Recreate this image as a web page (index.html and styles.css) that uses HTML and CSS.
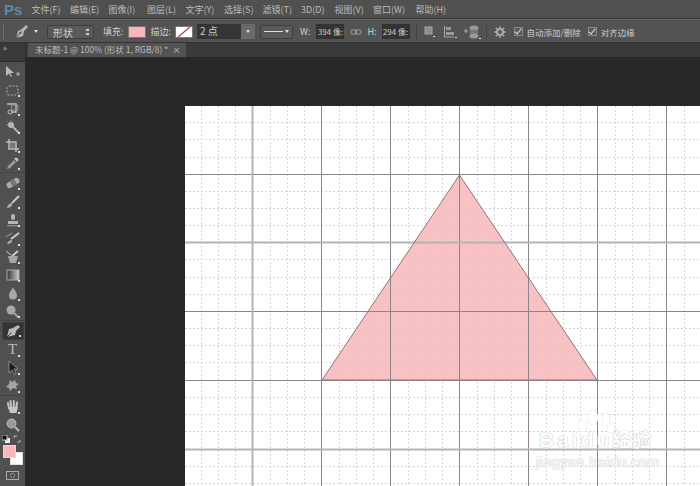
FILE: index.html
```html
<!DOCTYPE html>
<html lang="zh-CN">
<head>
    <meta charset="UTF-8">
    <meta name="viewport" content="width=device-width, initial-scale=1.0">
    <title>Photoshop</title>
    <link rel="stylesheet" href="styles.css">
</head>
<body>
    <div class="menubar">
        <span class="logo">Ps</span>
        <span class="menu-item">文件(F)</span>
        <span class="menu-item">编辑(E)</span>
        <span class="menu-item">图像(I)</span>
        <span class="menu-item">图层(L)</span>
        <span class="menu-item">文字(Y)</span>
        <span class="menu-item">选择(S)</span>
        <span class="menu-item">滤镜(T)</span>
        <span class="menu-item menu-3d">3D(D)</span>
        <span class="menu-item">视图(V)</span>
        <span class="menu-item menu-wide">窗口(W)</span>
        <span class="menu-item">帮助(H)</span>
    </div>

    <div class="options">
        <div class="grip"></div>
        <svg class="opt-pen" width="16" height="16" viewBox="0 0 16 16"><path d="M13 1 15 3 11 7 10 12 3 14 5 7 9 5Z" fill="#b8b8b8"/><path d="M3 14 7 9" stroke="#444" stroke-width="1"/><circle cx="7.500" cy="8.500" r="1" fill="#444"/></svg>
        <span class="caret opt-caret"></span>
        <div class="select">形状<span class="updown"></span></div>
        <span class="label fill-label">填充:</span>
        <div class="swatch swatch-pink"></div>
        <span class="label stroke-label">描边:</span>
        <div class="swatch swatch-none"><svg width="18" height="12" viewBox="0 0 18 12"><path d="M2 12 16 0" stroke="#b3374a" stroke-width="1.200"/></svg></div>
        <div class="stroke-size">2 点</div>
        <div class="size-btn"><span class="caret"></span></div>
        <div class="line-style"><span class="line"></span><span class="caret"></span></div>
        <span class="label w-label">W:</span>
        <div class="dim">394 像:</div>
        <svg class="link" width="12" height="8" viewBox="0 0 14 8"><rect x="1" y="1.500" width="7" height="5" rx="2.500" fill="none" stroke="#aaa"/><rect x="6" y="1.500" width="7" height="5" rx="2.500" fill="none" stroke="#aaa"/></svg>
        <span class="label h-label">H:</span>
        <div class="dim">294 像:</div>
        <div class="sep sep-a"></div>
        <svg class="opt-icon path-op" width="12" height="12" viewBox="0 0 12 12"><rect x="1" y="1" width="7" height="7" fill="#8c8c8c" stroke="#a5a5a5"/><rect x="9" y="10" width="2" height="1" fill="#ddd"/></svg>
        <svg class="opt-icon path-align" width="14" height="14" viewBox="0 0 14 14"><path d="M1.500 1v11H11" fill="none" stroke="#aaa"/><rect x="3" y="2" width="5" height="3" fill="#999"/><rect x="3" y="7" width="8" height="3" fill="#999"/><rect x="12" y="12" width="2" height="1" fill="#ddd"/></svg>
        <svg class="opt-icon path-order" width="18" height="16" viewBox="0 0 18 16"><path d="M0 7h4M2 5v4" stroke="#aaa"/><ellipse cx="10" cy="4" rx="4.500" ry="2.500" fill="#9a9a9a"/><ellipse cx="10" cy="8" rx="4.500" ry="2.500" fill="#777"/><ellipse cx="10" cy="12" rx="4.500" ry="2.500" fill="#9a9a9a"/><rect x="15" y="14" width="2" height="1" fill="#ddd"/></svg>
        <div class="sep sep-b"></div>
        <svg class="opt-icon gear" width="12" height="12" viewBox="0 0 14 14"><circle cx="7" cy="7" r="3.500" fill="none" stroke="#aaa" stroke-width="2.500"/><path d="M7 0v14M0 7h14M2 2l10 10M12 2 2 12" stroke="#aaa" stroke-width="1.500" stroke-dasharray="2.500 9"/></svg>
        <label class="check check-a"><span class="box"></span>自动添加/删除</label>
        <label class="check check-b"><span class="box"></span>对齐边缘</label>
    </div>

    <div class="main">
        <div class="toolbar">
            <div class="tool-top">»</div>
            <div class="tool" style="height:19px"><svg width="16" height="14" viewBox="0 0 16 14"><path d="M1 1v10l3-2.500 2 3.500 1-1-2-3h4Z" fill="#bbb"/><path d="M11 9h4M13 7v4" stroke="#bbb"/></svg></div>
            <div class="tool more"><svg width="13" height="11" viewBox="0 0 13 11"><rect x="1" y="1" width="11" height="9" rx="2" fill="none" stroke="#b0b0b0" stroke-dasharray="2 1.500"/></svg></div>
            <div class="tool more"><svg width="14" height="13" viewBox="0 0 14 13"><path d="M1 2h9v8H5" fill="none" stroke="#bbb" stroke-width="1.500"/><path d="M5 3h7v5H6Z" fill="none" stroke="#999"/><circle cx="4" cy="10" r="2" fill="none" stroke="#bbb"/></svg></div>
            <div class="tool more"><svg width="14" height="14" viewBox="0 0 14 14"><path d="M6 6 13 13" stroke="#b5b5b5" stroke-width="2"/><circle cx="5" cy="5" r="3" fill="#b5b5b5"/><path d="M5 0v2M0 5h2M1.500 1.500l1 1" stroke="#888"/></svg></div>
            <div class="tool more"><svg width="13" height="13" viewBox="0 0 13 13"><path d="M3 0v10h10M0 3h10v10" fill="none" stroke="#bbb" stroke-width="1.500"/><rect x="4" y="4" width="5" height="5" fill="#777"/></svg></div>
            <div class="tool more tool-end"><svg width="13" height="13" viewBox="0 0 13 13"><path d="M1 12 2 9 8 3 10 5 4 11Z" fill="#999"/><path d="M8 1.500 11.500 5 12.500 2.500 10.500.5Z" fill="#ccc"/></svg></div>
            <div class="tool more"><svg width="14" height="12" viewBox="0 0 14 12"><rect x="0" y="3" width="14" height="6" rx="3" transform="rotate(-30 7 6)" fill="#aaa"/><rect x="5" y="3" width="5" height="6" transform="rotate(-30 7 6)" fill="#777"/></svg></div>
            <div class="tool more"><svg width="14" height="14" viewBox="0 0 14 14"><path d="M13 1 6 8" stroke="#ccc" stroke-width="2"/><path d="M1 13C2 9 4 8 6 8L6 10C6 12 3 13 1 13Z" fill="#aaa"/></svg></div>
            <div class="tool more"><svg width="14" height="14" viewBox="0 0 14 14"><rect x="5" y="1" width="4" height="6" rx="2" fill="#b5b5b5"/><path d="M2 8h10v3H2Z" fill="#b5b5b5"/><rect x="1" y="12" width="12" height="1.500" fill="#888"/></svg></div>
            <div class="tool more"><svg width="15" height="13" viewBox="0 0 15 13"><path d="M14 1 6 7" stroke="#ccc" stroke-width="2"/><path d="M2 12C3 9 5 8 7 8L7 10C6 11 4 12 2 12Z" fill="#aaa"/><path d="M1 5 7 1" stroke="#888" stroke-width="1.500"/></svg></div>
            <div class="tool more"><svg width="15" height="14" viewBox="0 0 15 14"><path d="M13 1 7 6" stroke="#ccc" stroke-width="2"/><path d="M3 6h10l-2 7H5Z" fill="#a5a5a5"/><path d="M1 1l5 4" stroke="#ccc"/></svg></div>
            <div class="tool more"><svg width="14" height="12" viewBox="0 0 14 12"><defs><linearGradient id="grad"><stop offset="0" stop-color="#333"/><stop offset="1" stop-color="#ccc"/></linearGradient></defs><rect x="1" y="1" width="12" height="10" fill="url(#grad)" stroke="#aaa"/></svg></div>
            <div class="tool more"><svg width="10" height="13" viewBox="0 0 10 13"><path d="M5 0C6 3 9 5 9 8.500A4 4 0 0 1 1 8.500C1 5 4 3 5 0Z" fill="#a8a8a8"/></svg></div>
            <div class="tool more tool-end"><svg width="13" height="13" viewBox="0 0 13 13"><circle cx="5" cy="5" r="4.500" fill="#a8a8a8"/><path d="M8 8 12 12" stroke="#a8a8a8" stroke-width="2"/></svg></div>
            <div class="tool more active"><svg width="14" height="14" viewBox="0 0 14 14"><path d="M12 1 14 3 10 7 9 11 1 13 3 5 7 4Z" fill="#b8b8b8"/><path d="M1 13 5.500 8.500" stroke="#3a3a3a"/></svg></div>
            <div class="tool more"><span class="type">T</span></div>
            <div class="tool more"><svg width="10" height="14" viewBox="0 0 10 14"><path d="M1 0v12l3-3 2.500 4.500 1.500-1L6 8h4Z" fill="#1c1c1c" stroke="#aaa" stroke-width=".7"/></svg></div>
            <div class="tool more tool-end"><svg width="15" height="13" viewBox="0 0 15 13"><path d="M5 1 7 3 10 1 11 4 14 5 11 7 12 10 8 9 5 12 4 9 1 8 4 5Z" fill="#a5a5a5"/></svg></div>
            <div class="tool more hand-tool"><svg width="14" height="15" viewBox="0 0 14 15"><path d="M3 9 2 4M5.200 8 4.500 2M7.800 8V2M10.300 8.500 11 3.500" stroke="#c5c5c5" stroke-width="2" stroke-linecap="round"/><path d="M2 8 4 14h6.500L12 8Z" fill="#c5c5c5"/></svg></div>
            <div class="tool"><svg width="14" height="14" viewBox="0 0 14 14"><circle cx="5.500" cy="5.500" r="4.500" fill="#999" stroke="#bbb"/><path d="M9 9 13 13" stroke="#bbb" stroke-width="2"/></svg></div>
            <div class="mini-colors">
                <svg width="8" height="8" viewBox="0 0 8 8"><rect x="3" y="3" width="5" height="5" fill="#eee"/><rect x="0" y="0" width="5" height="5" fill="#111" stroke="#bbb"/></svg>
                <svg width="8" height="8" viewBox="0 0 8 8"><path d="M1 3V1h3M7 5v2H4" fill="none" stroke="#bbb"/></svg>
            </div>
            <div class="colors">
                <div class="bg-color"></div>
                <div class="fg-color"></div>
            </div>
            <div class="mask"><span></span></div>
        </div>

        <div class="workspace">
            <div class="tabbar">
                <div class="tab">未标题-1 @ 100% (形状 1, RGB/8) * <span class="close">×</span></div>
            </div>
            <div class="pasteboard">
                <svg class="canvas" width="515" height="380" viewBox="0 0 515 380">
                    <rect width="515" height="380" fill="#fff"/>
                    <path class="grid-minor" d="M16.500 0V380M33.500 0V380M50.500 0V380M85.500 0V380M102.500 0V380M119.500 0V380M154.500 0V380M171.500 0V380M188.500 0V380M223.500 0V380M240.500 0V380M257.500 0V380M292.500 0V380M309.500 0V380M326.500 0V380M361.500 0V380M378.500 0V380M395.500 0V380M430.500 0V380M447.500 0V380M464.500 0V380M499.500 0V380M0 16.500H515M0 33.500H515M0 51.500H515M0 85.500H515M0 102.500H515M0 119.500H515M0 153.500H515M0 171.500H515M0 188.500H515M0 222.500H515M0 239.500H515M0 256.500H515M0 291.500H515M0 308.500H515M0 325.500H515M0 360.500H515M0 377.500H515"/>
                    <path class="triangle" d="M274.500 69 412 274H137Z"/>
                    <path class="grid-major" d="M136.500 0V380M205.500 0V380M274.500 0V380M343.500 0V380M412.500 0V380M481.500 0V380M0 68.500H515M0 205.500H515M0 274.500H515"/>
                    <path class="grid-soft" d="M67.500 0V380M0 136.500H515M0 343.500H515"/>
                    <path class="triangle-edge" d="M274.500 69 412 274H137Z"/>
                </svg>
                <div class="watermark">
                    <div class="wm-paw"><i></i><i></i><i></i><i></i></div>
                    <div class="wm-title">Baidu<span>经验</span></div>
                    <div class="wm-url">jingyan.baidu.com</div>
                </div>
            </div>
        </div>
    </div>
</body>
</html>
```

FILE: styles.css
```css
* {
    box-sizing: border-box;
}

body {
    margin: 0;
    width: 700px;
    height: 486px;
    overflow: hidden;
    display: flex;
    flex-direction: column;
    background: #282828;
    color: #c4c4c4;
    font-family: "Noto Sans CJK SC", "Liberation Sans", sans-serif;
    font-size: 9px;
}

/* top menu */
.menubar {
    height: 19px;
    flex-shrink: 0;
    display: flex;
    align-items: center;
    gap: 11.500px;
    background: #505050;
    padding-left: 4px;
    border-bottom: 1px solid #3c3c3c;
}

.logo {
    width: 16px;
    color: #5d88ad;
    font-family: "Liberation Sans", sans-serif;
    font-size: 15px;
    font-weight: bold;
}

.menu-item {
    white-space: nowrap;
    width: 27px;
    color: #bcbcbc;
}

.menu-3d {
    width: 22px;
}

.menu-wide {
    width: 31px;
}

/* options bar */
.options {
    height: 24px;
    flex-shrink: 0;
    display: flex;
    align-items: center;
    padding-top: 1px;
    background: #535353;
    border-top: 1px solid #666;
    border-bottom: 1px solid #333;
}

.grip {
    width: 2px;
    height: 15px;
    margin-left: 3px;
    border-left: 1px dotted #888;
}

.opt-pen {
    margin-left: 8px;
}

.caret {
    width: 0;
    height: 0;
    border: 2.500px solid transparent;
    border-top: 3px solid #ddd;
    border-bottom: 0;
}

.opt-caret {
    margin-left: 5px;
}

.select {
    width: 47px;
    height: 14px;
    margin-left: 9px;
    padding-left: 5px;
    line-height: 13px;
    position: relative;
    background: #5a5a5a;
    border: 1px solid #3e3e3e;
    border-radius: 2px;
    color: #d0d0d0;
    font-size: 10px;
}

.updown {
    position: absolute;
    right: 4px;
    top: 3px;
    width: 3px;
    height: 6px;
    border-top: 2px solid #ccc;
    border-bottom: 2px solid #ccc;
}

.label {
    color: #d0d0d0;
}

.fill-label {
    margin-left: 9px;
}

.swatch {
    width: 18px;
    height: 12px;
    flex-shrink: 0;
    border: 1px solid #777;
}

.swatch-pink {
    margin-left: 4px;
    background: #f8b7bb;
}

.stroke-label {
    margin-left: 5px;
}

.swatch-none {
    margin-left: 4px;
    background: #fff;
    padding: 0;
    overflow: hidden;
}

.swatch-none svg {
    display: block;
    margin: -1px;
}

.stroke-size {
    width: 44px;
    height: 15px;
    margin-left: 4px;
    padding-left: 3px;
    line-height: 14px;
    background: #353535;
    color: #ccc;
    font-size: 10px;
}

.size-btn {
    width: 14px;
    height: 15px;
    display: flex;
    align-items: center;
    justify-content: center;
    background: #6a6a6a;
}

.line-style {
    width: 33px;
    height: 14px;
    margin-left: 5px;
    padding: 0 3px;
    display: flex;
    align-items: center;
    gap: 2px;
    background: #5a5a5a;
    border: 1px solid #3e3e3e;
    border-radius: 2px;
}

.line {
    width: 20px;
    height: 1px;
    background: #ddd;
}

.w-label {
    margin-left: 7px;
}

.dim {
    width: 28px;
    height: 15px;
    margin-left: 6px;
    line-height: 15px;
    white-space: nowrap;
    overflow: hidden;
    text-align: center;
    background: #333;
    color: #ccc;
    font-size: 8px;
}

.link {
    margin: 0 3px 0 6px;
}

.h-label {
    margin-left: 2px;
    margin-right: -1px;
}

.sep {
    width: 1px;
    height: 16px;
    background: #444;
}

.sep-a {
    margin-left: 6px;
}

.opt-icon {
    flex-shrink: 0;
}

.path-op {
    margin-left: 7px;
}

.path-align {
    margin-left: 7px;
}

.path-order {
    margin-left: 7px;
}

.sep-b {
    margin-left: 4px;
}

.gear {
    margin-left: 7px;
}

.check {
    display: flex;
    align-items: center;
    white-space: nowrap;
    color: #cfcfcf;
    font-size: 8.500px;
}

.check-a {
    margin-left: 8px;
}

.check-b {
    margin-left: 7px;
}

.box {
    width: 9px;
    height: 9px;
    margin-right: 4px;
    background: #5c5c5c;
    border: 1px solid #888;
    position: relative;
}

.box::after {
    content: "";
    position: absolute;
    left: 1px;
    top: -1px;
    width: 3px;
    height: 6px;
    border: solid #ddd;
    border-width: 0 1px 1px 0;
    transform: rotate(40deg);
}

/* left toolbar + document area */
.main {
    flex: 1;
    display: flex;
    min-height: 0;
}

.toolbar {
    width: 26px;
    flex-shrink: 0;
    display: flex;
    flex-direction: column;
    align-items: center;
    background: #505050;
    border-right: 1px solid #2c2c2c;
}

.tool-top {
    width: 100%;
    height: 19px;
    flex-shrink: 0;
    padding-left: 3px;
    line-height: 9px;
    font-size: 8px;
    background: #3a3a3a;
    border-bottom: 1px solid #2c2c2c;
}

.tool {
    width: 100%;
    height: 18.400px;
    flex-shrink: 0;
    display: flex;
    align-items: center;
    justify-content: center;
    position: relative;
}

.more::after {
    content: "";
    position: absolute;
    right: 5px;
    bottom: 2px;
    width: 2px;
    height: 2px;
    background: #ddd;
}

.tool-end {
    margin-bottom: 1px;
    border-bottom: 1px solid #444;
}

.active {
    width: 22px;
    background: #343434;
    border: 1px solid #3f3f3f;
    border-radius: 1px;
}

.active::after {
    right: 2px;
}

.type {
    color: #bbb;
    font-family: "Liberation Serif", serif;
    font-size: 15px;
    line-height: 1;
}

.hand-tool {
    height: 19px;
}

.mini-colors {
    width: 100%;
    height: 9px;
    margin-top: 1px;
    padding: 0 4px 0 2px;
    display: flex;
    justify-content: space-between;
}

.mini-colors svg {
    display: block;
}

.colors {
    width: 20px;
    height: 20px;
    flex-shrink: 0;
    margin-top: 1px;
    position: relative;
}

.fg-color,
.bg-color {
    position: absolute;
    width: 13px;
    height: 13px;
    border: 1px solid #ddd;
}

.fg-color {
    left: 0;
    top: 0;
    background: #f8b7bb;
}

.bg-color {
    right: 0;
    bottom: 0;
    background: #fff;
}

.mask {
    width: 13px;
    height: 9px;
    margin-top: 6px;
    flex-shrink: 0;
    display: flex;
    align-items: center;
    justify-content: center;
    border: 1px solid #aaa;
}

.mask span {
    width: 5px;
    height: 5px;
    border: 1px dotted #bbb;
    border-radius: 50%;
}

.workspace {
    flex: 1;
    min-width: 0;
    display: flex;
    flex-direction: column;
}

.tabbar {
    height: 14px;
    flex-shrink: 0;
    background: #3a3a3a;
}

.tab {
    width: 158px;
    height: 14px;
    margin-left: 2px;
    padding-left: 7px;
    line-height: 13px;
    white-space: nowrap;
    background: #535353;
    color: #bdbdbd;
    font-size: 8.500px;
}

.close {
    margin-left: 2px;
}

.pasteboard {
    flex: 1;
    position: relative;
    overflow: hidden;
    background: #282828;
}

.canvas {
    display: block;
    margin: 49px 0 0 159px;
}

.grid-minor {
    fill: none;
    stroke: #d6d6d6;
    stroke-dasharray: 2 2;
}

.grid-major {
    fill: none;
    stroke: #868686;
}

.grid-soft {
    fill: none;
    stroke: #b4b4b4;
    stroke-width: 2;
}

.triangle {
    fill: #f8bcc0;
    fill-opacity: .93;
}

.triangle-edge {
    fill: none;
    stroke: #8f7478;
}

/* baidu mark sits over the canvas */
.watermark {
    position: absolute;
    left: 510px;
    top: 353px;
    width: 128px;
    color: #fff;
    font-family: "Liberation Sans", sans-serif;
    text-shadow: 0 0 1px #bbb, 0 0 1px #bbb;
}

.wm-paw {
    position: relative;
    height: 18px;
}

.wm-paw i {
    position: absolute;
    border-radius: 50%;
    background: #fff;
    box-shadow: 0 0 1px #c4c4c4;
}

.wm-paw i:nth-child(1) { left: 42px; top: 10px; width: 9px; height: 12px; }
.wm-paw i:nth-child(2) { left: 52px; top: 0; width: 10px; height: 15px; }
.wm-paw i:nth-child(3) { left: 66px; top: 3px; width: 8px; height: 14px; }
.wm-paw i:nth-child(4) { left: 71px; top: 13px; width: 8px; height: 10px; }

.wm-title {
    padding-left: 3px;
    font-size: 21px;
    line-height: 22px;
    font-weight: bold;
    letter-spacing: 3px;
    white-space: nowrap;
    position: relative;
}

.wm-title span {
    font-family: "Noto Sans CJK SC", sans-serif;
    font-size: 19px;
    letter-spacing: 1px;
}

.wm-url {
    margin-top: 3px;
    font-size: 14.500px;
    line-height: 16px;
    letter-spacing: .4px;
    white-space: nowrap;
}
```
